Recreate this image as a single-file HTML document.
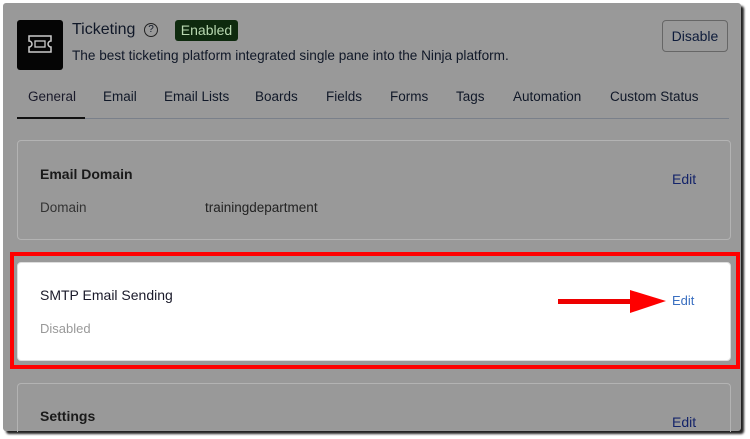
<!DOCTYPE html><html><head><style>
body{margin:0;width:750px;height:439px;background:#fff;position:relative;overflow:hidden;font-family:"Liberation Sans",sans-serif;}
.win{position:absolute;left:3px;top:3px;width:738px;height:428px;background:#999;box-shadow:3px 3px 2px #222;border-radius:3px;overflow:hidden}
.a{position:absolute;white-space:nowrap;color:#101828}
.card{position:absolute;border:1px solid #b3b3b3;border-radius:4px}
</style></head><body>
<div class="win"></div>
<div class="a" style="left:17px;top:20px;width:46px;height:50px;background:#050505;border-radius:3px"></div>
<svg style="position:absolute;left:27px;top:34px" width="26" height="20" viewBox="0 0 26 20"><path d="M2 2h22v5a3 3 0 0 0 0 6v5H2v-5a3 3 0 0 0 0-6z" fill="none" stroke="#ccc" stroke-width="1.5"/><rect x="8" y="7" width="10" height="6" fill="none" stroke="#ccc" stroke-width="1.3"/></svg>
<div class="a" style="left:72px;top:21px;font-size:16px">Ticketing</div>
<div class="a" style="left:144px;top:23px;width:12px;height:12px;border:1.3px solid #222;border-radius:50%;font-size:10px;text-align:center;line-height:12px">?</div>
<div class="a" style="left:175px;top:20px;width:63px;height:21px;background:#0e2a0e;border-radius:3px;color:#b8d8b0;font-size:14px;text-align:center;line-height:20px">Enabled</div>
<div class="a" style="left:72px;top:48px;font-size:13.6px">The best ticketing platform integrated single pane into the Ninja platform.</div>
<div class="a" style="left:662px;top:20px;width:66px;height:32px;border:1px solid #666;border-radius:4px;box-sizing:border-box;font-size:14px;text-align:center;line-height:30px;color:#0d1b3a">Disable</div>
<div class="a" style="left:28px;top:89px;font-size:13.5px;color:#1a1a2a">General</div>
<div class="a" style="left:103px;top:89px;font-size:13.5px">Email</div>
<div class="a" style="left:164px;top:89px;font-size:13.5px">Email Lists</div>
<div class="a" style="left:255px;top:89px;font-size:13.5px">Boards</div>
<div class="a" style="left:326px;top:89px;font-size:13.5px">Fields</div>
<div class="a" style="left:390px;top:89px;font-size:13.5px">Forms</div>
<div class="a" style="left:456px;top:89px;font-size:13.5px">Tags</div>
<div class="a" style="left:513px;top:89px;font-size:13.5px">Automation</div>
<div class="a" style="left:610px;top:89px;font-size:13.5px">Custom Status</div>
<div class="a" style="left:17px;top:118px;width:712px;height:1px;background:#7a808a"></div>
<div class="a" style="left:17px;top:117px;width:68px;height:2px;background:#111"></div>
<div class="card" style="left:17px;top:140px;width:712px;height:98px"></div>
<div class="a" style="left:40px;top:166px;font-size:14px;font-weight:bold;color:#1a1a1a">Email Domain</div>
<div class="a" style="left:672px;top:171px;font-size:14px;color:#14246a">Edit</div>
<div class="a" style="left:40px;top:200px;font-size:13.5px;color:#333">Domain</div>
<div class="a" style="left:205px;top:200px;font-size:13.5px;color:#222">trainingdepartment</div>
<div class="a" style="left:10px;top:252px;width:722px;height:109px;border:4px solid #f00"></div>
<div class="a" style="left:17px;top:262px;width:714px;height:99px;background:#fff;border:1px solid #ddd;border-radius:4px;box-sizing:border-box"></div>
<div class="a" style="left:40px;top:287px;font-size:14px;color:#1a1a2a">SMTP Email Sending</div>
<div class="a" style="left:40px;top:321px;font-size:13px;color:#999">Disabled</div>
<div class="a" style="left:672px;top:293px;font-size:13px;color:#3a6fc0">Edit</div>
<svg style="position:absolute;left:556px;top:288px" width="112" height="28"><rect x="2" y="11" width="75" height="5" fill="#e00"/><polygon points="74,2 110,13 74,25" fill="#f00"/></svg>
<div class="card" style="left:17px;top:383px;width:712px;height:48px;border-bottom:none;border-radius:4px 4px 0 0"></div>
<div class="a" style="left:40px;top:408px;font-size:14px;font-weight:bold;color:#1a1a1a">Settings</div>
<div class="a" style="left:672px;top:414px;font-size:14px;color:#14246a">Edit</div>
</body></html>
